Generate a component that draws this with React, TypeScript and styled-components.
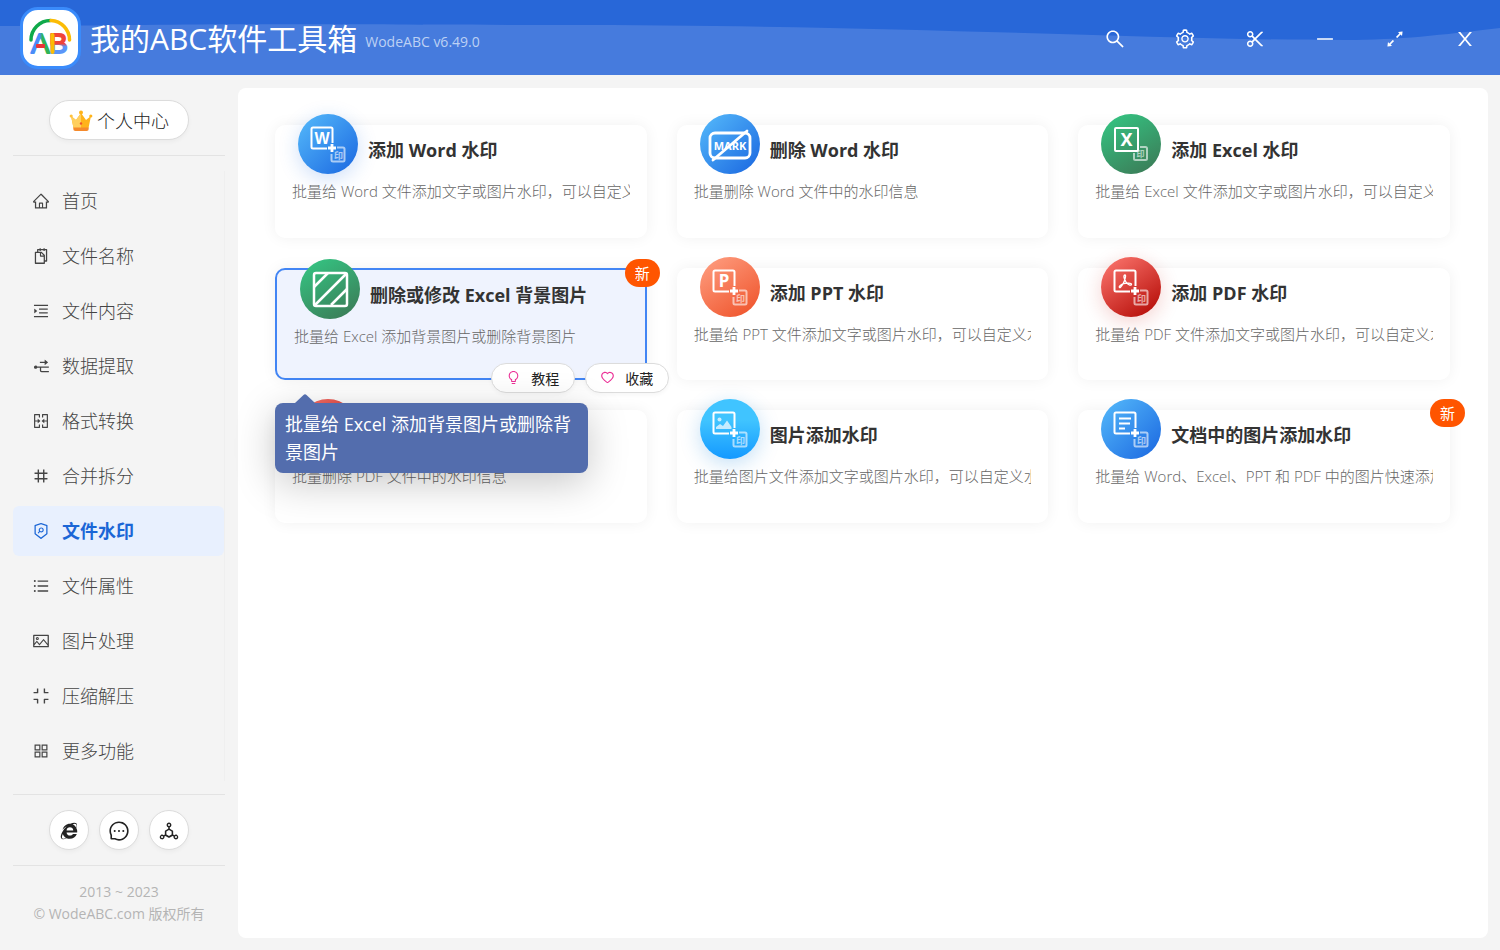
import React from "react";
import styled, { createGlobalStyle, css } from "styled-components";
import {
  AiOutlineHome,
  AiOutlineSnippets,
  AiOutlineMenuUnfold,
  AiOutlineNodeExpand,
  AiOutlineMergeCells,
  AiOutlineNumber,
  AiOutlineSecurityScan,
  AiOutlineUnorderedList,
  AiOutlinePicture,
  AiOutlineCompress,
  AiOutlineAppstore,
  AiOutlineIe,
  AiOutlineMessage,
  AiOutlineDeploymentUnit,
  AiOutlineSearch,
  AiOutlineSetting,
  AiOutlineScissor,
  AiOutlineMinus,
  AiOutlineArrowsAlt,
  AiOutlineBulb,
  AiOutlineHeart,
} from "react-icons/ai";

const GlobalStyle = createGlobalStyle`
  * { box-sizing: border-box; }
  body {
    margin: 0;
    background: #f4f4f4;
    color: #333;
    font-family: "Open Sans", "Noto Sans CJK SC", sans-serif;
    font-size: 15px;
  }
  button { font-family: inherit; cursor: pointer; }
  h1, h2, p { margin: 0; }
`;

const Page = styled.div`
  display: flex;
  flex-direction: column;
  min-height: 100vh;
`;

/* ---------- header ---------- */

const Header = styled.header`
  position: relative;
  display: flex;
  align-items: center;
  height: 75px;
  padding-left: 20px;
  background: #467bdd;
  color: #fff;
`;

const Wave = styled.svg`
  position: absolute;
  inset: 0;
  width: 100%;
  height: 100%;
`;

const Brand = styled.div`
  position: relative;
  display: flex;
  align-items: center;
  flex: 1;
`;

const LogoBox = styled.div`
  width: 61px;
  height: 62px;
  border: 3px solid #3a8bfb;
  border-radius: 18px;
  background: #fff;
  overflow: hidden;
  svg { display: block; }
`;

const AppName = styled.h1`
  margin: 2px 0 0 9px;
  font-size: 30px;
  font-weight: 400;
  line-height: 40px;
  white-space: nowrap;
`;

const Version = styled.span`
  margin: 8px 0 0 8px;
  font-size: 14px;
  color: #bdd1f4;
  white-space: nowrap;
`;

const WindowBar = styled.div`
  position: relative;
  display: flex;
  padding-top: 2px;
`;

const WindowButton = styled.button`
  display: flex;
  align-items: center;
  justify-content: center;
  width: 70px;
  height: 72px;
  padding: 0;
  border: 0;
  background: none;
  color: #fff;
  font-size: 22px;
`;

/* ---------- sidebar ---------- */

const Body = styled.div`
  display: flex;
  flex: 1;
`;

const Sidebar = styled.aside`
  display: flex;
  flex-direction: column;
  flex: none;
  width: 238px;
  padding: 25px 13px 0;
`;

const pill = css`
  display: flex;
  align-items: center;
  justify-content: center;
  border: 1px solid #dcdcdc;
  background: #fff;
  color: #222;
  box-shadow: 0 2px 4px rgba(0, 0, 0, 0.04);
`;

const AccountButton = styled.button`
  ${pill}
  align-self: center;
  gap: 4px;
  width: 140px;
  height: 40px;
  padding: 0;
  border-radius: 20px;
  font-size: 18px;
  font-weight: 300;
`;

const Divider = styled.hr<{ $top: number; $bottom: number }>`
  width: 100%;
  height: 1px;
  margin: ${(p) => p.$top}px 0 ${(p) => p.$bottom}px;
  border: 0;
  background: #e3e3e3;
`;

const Menu = styled.nav`
  display: flex;
  flex-direction: column;
  gap: 5px;
  padding: 5px 0;
  border-right: 1px solid #efefef;
`;

const MenuLink = styled.a<{ $active?: boolean }>`
  display: flex;
  align-items: center;
  gap: 12px;
  height: 50px;
  padding-left: 19px;
  border-radius: 6px;
  font-size: 18px;
  font-weight: ${(p) => (p.$active ? 700 : 300)};
  color: ${(p) => (p.$active ? "#1b66d6" : "#444")};
  background: ${(p) => (p.$active ? "#e8f0fe" : "transparent")};
  text-decoration: none;
  svg { flex: none; }
`;

const MenuLabel = styled.span`
  padding-bottom: 2px;
`;

const Socials = styled.div`
  display: flex;
  justify-content: center;
  gap: 10px;
`;

const RoundButton = styled.button`
  ${pill}
  width: 40px;
  height: 40px;
  padding: 2px 0 0;
  border-radius: 50%;
  font-size: 22px;
`;

const Copyright = styled.footer`
  font-size: 14px;
  line-height: 22px;
  text-align: center;
  color: #b4b4b4;
`;

/* ---------- tools ---------- */

const Panel = styled.main`
  flex: 1;
  min-width: 0;
  margin: 13px 12px 12px 0;
  padding: 37px 38px 37px 37px;
  border-radius: 8px;
  background: #fff;
`;

const Grid = styled.div`
  display: grid;
  grid-template-columns: repeat(3, minmax(0, 1fr));
  grid-auto-rows: 113px 112px;
  gap: 30px;
`;

const Card = styled.article<{ $active?: boolean }>`
  position: relative;
  padding: 0 17px;
  border-radius: 10px;
  background: #fff;
  box-shadow: 0 0 15px rgba(0, 0, 0, 0.06);
  ${(p) =>
    p.$active &&
    css`
      z-index: 1;
      border: 2px solid #4285f4;
      background: #eff3fe;
    `}
`;

const CardHead = styled.div`
  display: flex;
  gap: 10px;
  height: 54px;
  padding-left: 6px;
`;

const IconDisc = styled.span<{ $fill: string; $glow?: string }>`
  flex: none;
  width: 60px;
  height: 60px;
  margin-top: -11px;
  border-radius: 50%;
  background: ${(p) => p.$fill};
  box-shadow: ${(p) => (p.$glow ? `0 5px 20px ${p.$glow}` : "none")};
  svg { display: block; }
`;

const CardTitle = styled.h2`
  padding-top: 13px;
  font-size: 18px;
  font-weight: 700;
  line-height: 24px;
  white-space: nowrap;
`;

const CardText = styled.p`
  overflow: hidden;
  font-size: 15px;
  font-weight: 300;
  line-height: 24px;
  color: #666;
  white-space: nowrap;
`;

const NewBadge = styled.span`
  position: absolute;
  top: -11px;
  right: -15px;
  width: 35px;
  height: 28px;
  border-radius: 14px;
  background: #ff5500;
  color: #fff;
  font-size: 15px;
  line-height: 28px;
  text-align: center;
`;

const CardActions = styled.div`
  position: absolute;
  right: -24px;
  bottom: -15px;
  display: flex;
  gap: 10px;
`;

const ActionButton = styled.button`
  ${pill}
  gap: 10px;
  width: 84px;
  height: 30px;
  padding: 0 0 1px;
  border-radius: 15px;
  font-size: 14px;
  svg { color: #eb2f96; font-size: 15px; background: none; }
`;

const Tooltip = styled.div`
  position: absolute;
  top: calc(100% + 25px);
  left: -2px;
  width: 313px;
  padding: 7px 8px 7px 10px;
  border-radius: 8px;
  background: #536dad;
  color: #fff;
  font-size: 18px;
  line-height: 28px;
  box-shadow: 0 10px 40px rgba(0, 0, 0, 0.22);
`;

const TooltipArrow = styled.svg`
  position: absolute;
  top: -9px;
  left: 20px;
`;

/* ---------- drawings ---------- */

const Logo = () => (
  <svg width="55" height="56" viewBox="0 0 55 56" aria-hidden="true">
    <defs>
      <linearGradient id="lgA" x1="0" x2="1">
        <stop offset="0.45" stopColor="#4a8df8" />
        <stop offset="0.6" stopColor="#2fb457" />
      </linearGradient>
      <linearGradient id="lgB" x1="0" y1="0" x2="0" y2="1">
        <stop offset="0.5" stopColor="#f04438" />
        <stop offset="0.6" stopColor="#5b95f9" />
      </linearGradient>
    </defs>
    <path d="M8 30A19.500 19.500 0 0 1 27.500 10.500" fill="none" stroke="#0fa94a" strokeWidth="3.500" strokeLinecap="round" />
    <path d="M28 10.500A19.500 19.500 0 0 1 46.500 30" fill="none" stroke="#fbbc05" strokeWidth="3.500" strokeLinecap="round" />
    <g fontFamily="Liberation Sans, sans-serif" fontSize="28" strokeWidth="1.800" strokeLinejoin="round">
      <text x="8" y="43" fill="url(#lgA)" stroke="url(#lgA)">A</text>
      <text x="26" y="43" fill="url(#lgB)" stroke="url(#lgB)">B</text>
    </g>
    <rect x="13" y="34" width="9" height="4" rx="1" fill="#ea3535" />
    <rect x="27.500" y="23" width="4" height="21" rx="2" fill="#fbbc05" />
  </svg>
);

const Crown = () => (
  <svg width="24" height="26" viewBox="0 -2 24 26" aria-hidden="true">
    <path d="M2 7l5 4 5-7 5 7 5-4-2.500 12h-15z" fill="#ffb31a" />
    <path d="M2 7l5 4 5-7v15H4.500z" fill="#ffcf5e" />
    <circle cx="12" cy="3.500" r="2" fill="#ffb31a" />
    <circle cx="2.200" cy="7" r="1.600" fill="#ffc23d" />
    <circle cx="21.800" cy="7" r="1.600" fill="#ffb31a" />
    <circle cx="12" cy="14.500" r="1.200" fill="#f0532d" />
    <path d="M4.300 18.500h15.400v1.500a2 2 0 0 1-2 2H6.300a2 2 0 0 1-2-2z" fill="#f58a2c" />
  </svg>
);

const CloseGlyph = () => (
  <svg width="22" height="22" viewBox="0 0 1024 1024" fill="currentColor" aria-hidden="true">
    <path d="M563.8 512l262.5-312.9c4.4-5.2.7-13.1-6.1-13.1h-79.8c-4.7 0-9.2 2.1-12.3 5.7L511.6 449.8 295.1 191.7c-3-3.6-7.5-5.7-12.3-5.7H203c-6.8 0-10.500 7.900-6.100 13.100L459.400 512 196.900 824.900A7.950 7.950 0 0 0 203 838h79.800c4.700 0 9.200-2.100 12.300-5.700l216.500-258.100 216.500 258.100c3 3.600 7.500 5.700 12.300 5.700h79.800c6.800 0 10.500-7.900 6.100-13.100L563.800 512z" />
  </svg>
);

const stampLabel = {
  fontSize: 9,
  fontWeight: 700,
  fill: "#fff",
  textAnchor: "middle" as const,
  fontFamily: "Noto Sans CJK SC, sans-serif",
};

const Stamp = () => (
  <>
    <g opacity="0.6">
      <path d="M39 33.500h6a1.500 1.500 0 0 1 1.500 1.500v11a1.500 1.500 0 0 1-1.500 1.500H35a1.500 1.500 0 0 1-1.500-1.500v-6" fill="none" stroke="#fff" strokeWidth="2" />
      <text x="40.500" y="44.500" {...stampLabel}>
        印
      </text>
    </g>
    <path d="M34 30v8M30 34h8" stroke="#fff" strokeWidth="2.800" />
  </>
);

const Frame = ({ children }: { children: React.ReactNode }) => (
  <>
    <path d="M29 34.500H15a1.500 1.500 0 0 1-1.500-1.500V15a1.500 1.500 0 0 1 1.500-1.500h18a1.500 1.500 0 0 1 1.500 1.500v14" fill="none" stroke="#fff" strokeWidth="2" />
    {children}
    <Stamp />
  </>
);

const letter = {
  fill: "#fff",
  textAnchor: "middle" as const,
  fontWeight: 700,
  fontFamily: "Noto Sans, sans-serif",
};

const drawings: Record<string, React.ReactNode> = {
  word: (
    <Frame>
      <text x="24" y="29.500" fontSize="16" {...letter} fontFamily="Liberation Sans, sans-serif">W</text>
    </Frame>
  ),
  mark: (
    <>
      <rect x="10" y="19" width="40" height="25" rx="5" fill="none" stroke="#fff" strokeWidth="2.800" />
      <text x="30" y="35.500" fontSize="11" {...letter}>MARK</text>
      <path d="M13 46L47 17" stroke="#fff" strokeWidth="2.800" strokeLinecap="round" />
    </>
  ),
  excel: (
    <>
      <rect x="14" y="14" width="23" height="23" rx="1" fill="none" stroke="#fff" strokeWidth="2" />
      <text x="25.500" y="32" fontSize="18" {...letter}>X</text>
      <g opacity="0.6">
        <path d="M39 33h5.500a1.500 1.500 0 0 1 1.500 1.500v10a1.500 1.500 0 0 1-1.500 1.500h-10a1.500 1.500 0 0 1-1.500-1.500v-5.500" fill="none" stroke="#fff" strokeWidth="2" />
        <text x="39.500" y="43" {...stampLabel} fontSize={8}>
          印
        </text>
      </g>
    </>
  ),
  background: (
    <g fill="none" stroke="#fff" strokeWidth="2.500">
      <rect x="14" y="14" width="33" height="33" rx="2" />
      <path d="M14 28L28 14M15 46L46 15M31 46L47 30" />
    </g>
  ),
  ppt: (
    <Frame>
      <text x="24" y="30" fontSize="17" {...letter}>P</text>
    </Frame>
  ),
  pdf: (
    <Frame>
      <path
        d="M24 18c-2 0-1 4 1 7s5 4 5.500 2.500-5-1.800-8-.8-5 3-4 3.800 4-4 5-7 1.500-5.500.5-5.500z"
        fill="none"
        stroke="#fff"
        strokeWidth="1.300"
      />
    </Frame>
  ),
  picture: (
    <Frame>
      <g fill="#fff" opacity="0.7">
        <circle cx="19.500" cy="20.500" r="2" />
        <path d="M16 30v-2l4-3 3 2 4-5.500 4.500 6.500v2z" />
      </g>
    </Frame>
  ),
  document: (
    <Frame>
      <path d="M18 19.500h12M18 24.500h11M18 29.500h6" stroke="#fff" strokeWidth="2" />
    </Frame>
  ),
};

/* ---------- data ---------- */

const menu = [
  { label: "首页", Icon: AiOutlineHome },
  { label: "文件名称", Icon: AiOutlineSnippets },
  { label: "文件内容", Icon: AiOutlineMenuUnfold },
  { label: "数据提取", Icon: AiOutlineNodeExpand },
  { label: "格式转换", Icon: AiOutlineMergeCells },
  { label: "合并拆分", Icon: AiOutlineNumber },
  { label: "文件水印", Icon: AiOutlineSecurityScan, active: true },
  { label: "文件属性", Icon: AiOutlineUnorderedList },
  { label: "图片处理", Icon: AiOutlinePicture },
  { label: "压缩解压", Icon: AiOutlineCompress },
  { label: "更多功能", Icon: AiOutlineAppstore },
];

const windowButtons = [
  { label: "搜索", Icon: AiOutlineSearch },
  { label: "设置", Icon: AiOutlineSetting },
  { label: "截图", Icon: AiOutlineScissor },
  { label: "最小化", Icon: AiOutlineMinus },
  { label: "最大化", Icon: AiOutlineArrowsAlt },
  { label: "关闭", Icon: CloseGlyph },
];

const blue = "linear-gradient(135deg, #56bbfb, #1a66e0)";
const green = "linear-gradient(150deg, #34c985, #3c7654)";
const red = "linear-gradient(145deg, #ff7a72, #b00500)";

type Tool = {
  title: string;
  text: string;
  icon: string;
  fill: string;
  glow?: string;
  isNew?: boolean;
  active?: boolean;
};

const tools: Tool[] = [
  { title: "添加 Word 水印", text: "批量给 Word 文件添加文字或图片水印，可以自定义水印", icon: "word", fill: blue, glow: "rgba(31,109,228,.22)" },
  { title: "删除 Word 水印", text: "批量删除 Word 文件中的水印信息", icon: "mark", fill: blue },
  { title: "添加 Excel 水印", text: "批量给 Excel 文件添加文字或图片水印，可以自定义水印", icon: "excel", fill: green },
  { title: "删除或修改 Excel 背景图片", text: "批量给 Excel 添加背景图片或删除背景图片", icon: "background", fill: green, isNew: true, active: true },
  { title: "添加 PPT 水印", text: "批量给 PPT 文件添加文字或图片水印，可以自定义水印", icon: "ppt", fill: "linear-gradient(145deg, #ffa184, #ee4f26)" },
  { title: "添加 PDF 水印", text: "批量给 PDF 文件添加文字或图片水印，可以自定义水印", icon: "pdf", fill: red, glow: "rgba(200,30,20,.2)" },
  { title: "删除 PDF 水印", text: "批量删除 PDF 文件中的水印信息", icon: "mark", fill: red },
  { title: "图片添加水印", text: "批量给图片文件添加文字或图片水印，可以自定义水印", icon: "picture", fill: "linear-gradient(#40c4ff 35%, #1499ff)", glow: "rgba(20,130,220,.25)" },
  { title: "文档中的图片添加水印", text: "批量给 Word、Excel、PPT 和 PDF 中的图片快速添加水印", icon: "document", fill: blue, isNew: true },
];

const ToolCard = ({ tool }: { tool: Tool }) => (
  <Card $active={tool.active}>
    <CardHead>
      <IconDisc $fill={tool.fill} $glow={tool.glow}>
        <svg width="60" height="60" viewBox="0 0 60 60" aria-hidden="true">
          {drawings[tool.icon]}
        </svg>
      </IconDisc>
      <CardTitle>{tool.title}</CardTitle>
    </CardHead>
    <CardText>{tool.text}</CardText>
    {tool.isNew && <NewBadge>新</NewBadge>}
    {tool.active && (
      <>
        <CardActions>
          <ActionButton type="button">
            <AiOutlineBulb />
            教程
          </ActionButton>
          <ActionButton type="button">
            <AiOutlineHeart />
            收藏
          </ActionButton>
        </CardActions>
        <Tooltip role="tooltip">
          <TooltipArrow width="20" height="9" viewBox="0 0 20 9" aria-hidden="true">
            <path d="M0 9L8.500 1a2 2 0 0 1 3 0L20 9z" fill="#536dad" />
          </TooltipArrow>
          {tool.text}
        </Tooltip>
      </>
    )}
  </Card>
);

export default function App() {
  return (
    <Page>
      <GlobalStyle />
      <Header>
        <Wave viewBox="0 0 1500 75" preserveAspectRatio="none" aria-hidden="true">
          <path d="M0 0H1500V28C1440 35 1400 40 1345 40C1150 40 900 25 560 25C380 25 300 24 200 24.500C120 25 60 26 0 26Z" fill="#2867d8" />
        </Wave>
        <Brand>
          <LogoBox>
            <Logo />
          </LogoBox>
          <AppName>我的ABC软件工具箱</AppName>
          <Version>WodeABC v6.49.0</Version>
        </Brand>
        <WindowBar>
          {windowButtons.map(({ label, Icon }) => (
            <WindowButton key={label} type="button" aria-label={label}>
              <Icon />
            </WindowButton>
          ))}
        </WindowBar>
      </Header>
      <Body>
        <Sidebar>
          <AccountButton type="button">
            <Crown />
            个人中心
          </AccountButton>
          <Divider $top={15} $bottom={15} />
          <Menu>
            {menu.map(({ label, Icon, active }) => (
              <MenuLink key={label} href="#" $active={active}>
                <Icon />
                <MenuLabel>{label}</MenuLabel>
              </MenuLink>
            ))}
          </Menu>
          <Divider $top={13} $bottom={15} />
          <Socials>
            <RoundButton type="button" aria-label="官网">
              <AiOutlineIe />
            </RoundButton>
            <RoundButton type="button" aria-label="留言">
              <AiOutlineMessage />
            </RoundButton>
            <RoundButton type="button" aria-label="分享">
              <AiOutlineDeploymentUnit />
            </RoundButton>
          </Socials>
          <Divider $top={15} $bottom={15} />
          <Copyright>
            2013 ~ 2023
            <br />© WodeABC.com 版权所有
          </Copyright>
        </Sidebar>
        <Panel>
          <Grid>
            {tools.map((tool) => (
              <ToolCard key={tool.title} tool={tool} />
            ))}
          </Grid>
        </Panel>
      </Body>
    </Page>
  );
}
